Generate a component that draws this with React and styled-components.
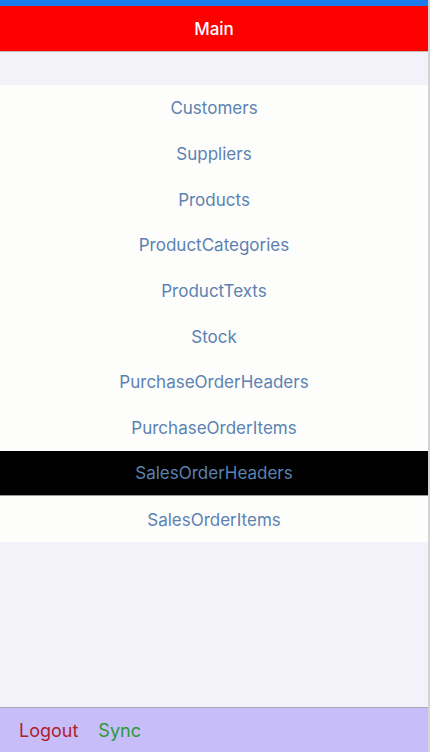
import React from "react";
import styled, { createGlobalStyle } from "styled-components";

const Global = createGlobalStyle`
  html, body { margin: 0; padding: 0; }
  body { font-family: Inter, "Noto Sans", "Liberation Sans", sans-serif; }
`;

const Screen = styled.div`
  width: 430px;
  height: 752px;
  display: flex;
  flex-direction: column;
  background: #f3f2fa;
  border-right: 2px solid #d4d4d8;
  box-sizing: border-box;
  overflow: hidden;
`;

const StatusStrip = styled.div`
  height: 6px;
  background: #1b7bea;
  flex-shrink: 0;
`;

const Header = styled.header`
  height: 46px;
  background: #ff0000;
  border-bottom: 1px solid #c9b8b8;
  box-sizing: border-box;
  display: flex;
  align-items: center;
  justify-content: center;
  color: #fff;
  font-size: 17px;
  font-weight: 500;
  flex-shrink: 0;
`;

const List = styled.ul`
  list-style: none;
  margin: 33px 0 0;
  padding: 0;
  background: #fdfdfc;
`;

const Row = styled.li`
  height: 45.7px;
  display: flex;
  align-items: center;
  justify-content: center;
  padding-top: 1px;
  font-size: 17px;
  color: #5b82b1;
  background: ${(p) => (p.$active ? "#000" : "transparent")};
  border-bottom: ${(p) => (p.$active ? "1px solid #9a9a9a" : "none")};
  box-sizing: border-box;
`;

const Spacer = styled.div`
  flex: 1;
`;

const Footer = styled.footer`
  height: 45px;
  background: #c7bdf8;
  border-top: 1px solid #a8a8b0;
  box-sizing: border-box;
  display: flex;
  align-items: center;
  gap: 20px;
  padding: 0 0 0 19px;
  font-size: 18px;
  flex-shrink: 0;
`;

const FooterLink = styled.span`
  color: ${(p) => p.$color};
`;

const items = [
  "Customers",
  "Suppliers",
  "Products",
  "ProductCategories",
  "ProductTexts",
  "Stock",
  "PurchaseOrderHeaders",
  "PurchaseOrderItems",
  "SalesOrderHeaders",
  "SalesOrderItems",
];

export default function App() {
  return (
    <>
      <Global />
      <Screen>
        <StatusStrip />
        <Header>Main</Header>
        <List>
          {items.map((it) => (
            <Row key={it} $active={it === "SalesOrderHeaders"}>
              {it}
            </Row>
          ))}
        </List>
        <Spacer />
        <Footer>
          <FooterLink $color="#b1202e">Logout</FooterLink>
          <FooterLink $color="#2a9a37">Sync</FooterLink>
        </Footer>
      </Screen>
    </>
  );
}
